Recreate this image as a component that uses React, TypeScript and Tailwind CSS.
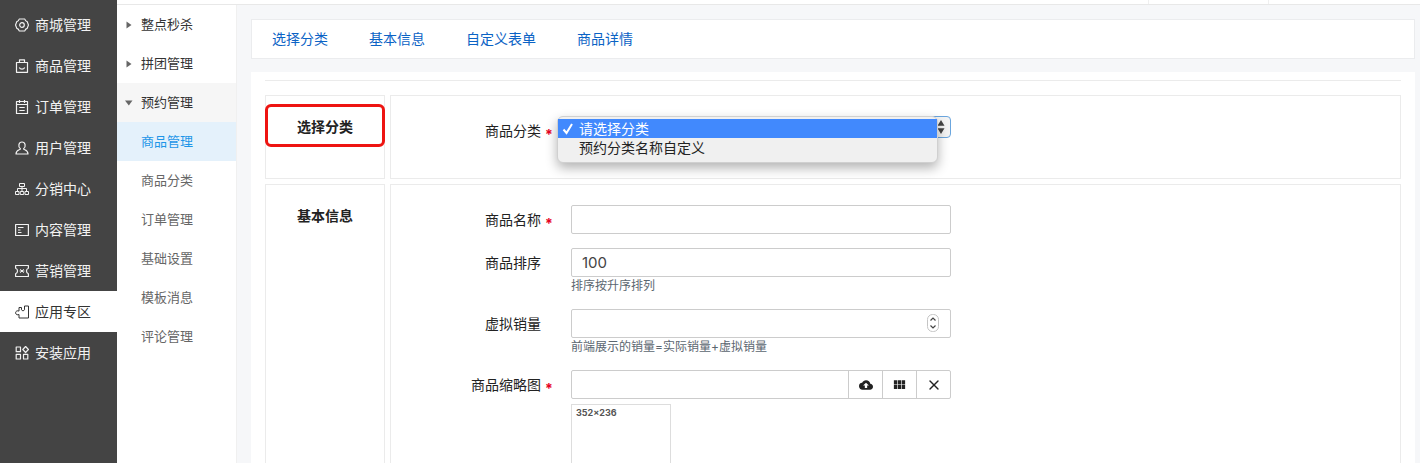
import React from "react";
import { X } from "lucide-react";
import { MdCloudUpload, MdViewModule } from "react-icons/md";

interface MenuItem {
    label: string;
    icon: React.ReactNode;
    active?: boolean;
}

const Icon = ({ children }: { children: React.ReactNode }) => (
    <svg
        viewBox="0 0 14 14"
        className="w-3.5 h-3.5 shrink-0"
        fill="none"
        stroke="currentColor"
        strokeWidth="1.2"
        strokeLinejoin="round"
        aria-hidden="true"
    >
        {children}
    </svg>
);

const mainMenu: MenuItem[] = [
    {
        label: "商城管理",
        icon: (
            <Icon>
                <path d="M4.200 1h5.600c.3 1.500 1 2.300 2.400 2.600L13.500 7l-1.300 3.400c-1.400.3-2.100 1.100-2.400 2.600H4.200c-.3-1.500-1-2.300-2.400-2.600L.5 7l1.300-3.400C3.200 3.300 3.900 2.500 4.200 1z" />
                <circle cx="7" cy="7" r="2.300" />
            </Icon>
        ),
    },
    {
        label: "商品管理",
        icon: (
            <Icon>
                <path d="M1.500 3.500h11v9.800h-11zM4.500 3.300V.8h5v2.500M4.300 8.500c1 2.200 4.400 2.200 5.400 0" />
            </Icon>
        ),
    },
    {
        label: "订单管理",
        icon: (
            <Icon>
                <path d="M1.500 1.500h11v12h-11zM1.500 4.500h11M4.500 0v3M9.500 0v3M4.300 7.500h5.400M4.300 10.500h5.400" />
            </Icon>
        ),
    },
    {
        label: "用户管理",
        icon: (
            <Icon>
                <path d="M5.400 7.800C2.800 6 3.500 1 7 1S11.200 6 8.600 7.800c.2 1.200 4.400.8 4.400 5.200H1c0-4.400 4.200-4 4.400-5.200z" />
            </Icon>
        ),
    },
    {
        label: "分销中心",
        icon: (
            <Icon>
                <path d="M4.500 1.500h5v3h-5zM7 4.500v5M2.500 9.500v-3h9v3M.5 9.500h3.500v3H.5zM5.250 9.500h3.500v3h-3.500zM10 9.500h3.500v3H10z" strokeWidth="1" />
            </Icon>
        ),
    },
    {
        label: "内容管理",
        icon: (
            <Icon>
                <path d="M.6 1.500h12.800v11H.6zM3 4.500h5.500M3 7h2.500M3 9.500h3.500" />
            </Icon>
        ),
    },
    {
        label: "营销管理",
        icon: (
            <Icon>
                <path d="M.6 1.500h12.800v2.800c-2.600.8-2.600 4.600 0 5.400v2.800H.6V9.700c2.600-.8 2.600-4.600 0-5.400z" />
                <path d="M5.300 5.200l3.400 3.600M8.700 5.200L5.300 8.800M4.600 7h4.800" strokeWidth="1" />
            </Icon>
        ),
    },
    {
        label: "应用专区",
        active: true,
        icon: (
            <Icon>
                <path d="M4 2.500h2.500v2.300c.6 1.300 2.400 1.300 3 0V1h4v12H4V9.500C2.600 10.300.6 9.600.6 7.800S2.600 5.300 4 6.100z" strokeWidth="1" />
            </Icon>
        ),
    },
    {
        label: "安装应用",
        icon: (
            <Icon>
                <path d="M1.200 1h4.300v4.700H1.200zM1.200 8.300h4.300V13H1.200zM8.500 8.300h4.300V13H8.500zM10.600.5l2.800 3-2.800 3-2.800-3z" />
            </Icon>
        ),
    },
];

const groups = [
    { label: "整点秒杀", open: false, children: [] },
    { label: "拼团管理", open: false, children: [] },
    {
        label: "预约管理",
        open: true,
        children: ["商品管理", "商品分类", "订单管理", "基础设置", "模板消息", "评论管理"],
    },
];

const tabs = ["选择分类", "基本信息", "自定义表单", "商品详情"];

interface FieldProps {
    id: string;
    label: string;
    required?: boolean;
    hint?: string;
    children: React.ReactNode;
}

const Field = ({ id, label, required, hint, children }: FieldProps) => (
    <div className="flex">
        <label htmlFor={id} className="flex h-[29px] w-[180px] shrink-0 leading-[29px]">
            <span className="w-[150px] text-right">{label}</span>
            {required && <span className="pl-1 pt-1 font-bold text-[#e60023]">*</span>}
        </label>
        <div className="w-[380px]">
            {children}
            {hint && <p className="text-xs leading-[18px] text-[#5b6670]">{hint}</p>}
        </div>
    </div>
);

const SectionTitle = ({ children }: { children: React.ReactNode }) => (
    <div className="relative w-[120px] shrink-0 border border-[#ebebeb] pt-5 text-center font-bold leading-[22px]">
        {children}
    </div>
);

const inputClass = "block w-full h-[29px] px-2.5 rounded-xs border border-[#cccccc] bg-white text-[15px] text-[#444] outline-none";

export default function App() {
    return (
        <div className="flex h-screen overflow-hidden bg-[#f6f7f9] font-['Inter','Noto_Sans_CJK_SC',sans-serif] text-sm text-[#222]">
            {/* Main menu */}
            <nav className="w-[117px] shrink-0 bg-[#444444] pt-1">
                {mainMenu.map((item) => (
                    <a
                        key={item.label}
                        href="#"
                        className={`flex h-[41px] items-center gap-1.5 pl-[15px] ${item.active ? "bg-white text-[#333]" : "text-[#f2f2f2]"}`}
                    >
                        {item.icon}
                        {item.label}
                    </a>
                ))}
            </nav>

            <div className="flex min-w-0 grow flex-col">
                <header className="flex h-[5px] shrink-0 justify-end border-b border-[#e8e8e8] bg-white">
                    <div className="w-[120px] border-l border-[#f0f0f0]" />
                    <div className="w-[152px] border-l border-[#f0f0f0]" />
                </header>

                <div className="flex min-h-0 grow">
                    {/* Sub menu */}
                    <nav className="w-[120px] shrink-0 border-r border-[#f0f0f0] bg-white text-[13px]">
                        {groups.map((group) => (
                            <div key={group.label}>
                                <button
                                    type="button"
                                    aria-expanded={group.open}
                                    className={`flex h-[39px] w-full items-center gap-2 pl-2 text-[#333] ${group.open ? "bg-[#f6f6f6]" : ""}`}
                                >
                                    <svg viewBox="0 0 8 8" className="h-2 w-2" fill="#666" aria-hidden="true">
                                        {group.open ? <path d="M0 1.500h7.500L3.800 6.500z" /> : <path d="M1.500.5l5 3.500-5 3.500z" />}
                                    </svg>
                                    {group.label}
                                </button>
                                {group.children.map((child, i) => (
                                    <a
                                        key={child}
                                        href="#"
                                        className={`flex h-[39px] items-center pl-6 ${i === 0 ? "bg-[#e4f1fb] text-[#1e96e8]" : "text-[#666]"}`}
                                    >
                                        {child}
                                    </a>
                                ))}
                            </div>
                        ))}
                    </nav>

                    <main className="flex min-w-0 grow flex-col gap-[13px] pl-3.5 pr-[5px] pt-3.5">
                        <div className="flex h-10 shrink-0 items-center gap-[41px] border border-[#ebecee] bg-white pl-5 text-[#0b63c5]">
                            {tabs.map((tab) => (
                                <a key={tab} href="#">
                                    {tab}
                                </a>
                            ))}
                        </div>

                        <form className="flex grow flex-col bg-white pl-3.5 pr-3.5 pt-2">
                            <hr className="mb-3.5 border-[#ebebeb]" />

                            {/* Category */}
                            <section className="mb-[5px] flex gap-[5px]">
                                <SectionTitle>
                                    选择分类
                                    <span className="absolute -inset-x-px top-2 h-[43px] rounded-md border-3 border-[#ee1411]" />
                                </SectionTitle>
                                <div className="grow border border-[#ebebeb] pb-[33px] pt-5">
                                    <Field id="category" label="商品分类" required>
                                        <div className="relative">
                                            <select
                                                id="category"
                                                className="block h-[22px] w-full appearance-none rounded-sm border border-[#6ba6de] bg-[#f4f4f4] px-2"
                                            >
                                                <option>请选择分类</option>
                                                <option>预约分类名称自定义</option>
                                            </select>
                                            <svg viewBox="0 0 8 14" className="absolute right-1.5 top-1 h-3.5 w-2" fill="#444" aria-hidden="true">
                                                <path d="M4 0l3.500 5.800h-7zM4 14l3.500-5.800h-7z" />
                                            </svg>
                                            <ul
                                                role="listbox"
                                                className="absolute -left-3.5 top-0 z-10 w-[381px] rounded-md border border-[#d0d0d0] bg-[#f0f0f0] pb-[5px] pt-0.5 leading-[19px] shadow-[0_5px_12px_rgba(0,0,0,0.3)]"
                                            >
                                                <li role="option" aria-selected="true" className="flex items-center bg-[#4189fd] text-white">
                                                    <svg viewBox="0 0 21 12" className="h-3 w-[21px]" fill="none" stroke="currentColor" strokeWidth="2" aria-hidden="true">
                                                        <path d="M5.500 6.500l3 3.500 5.500-9" />
                                                    </svg>
                                                    请选择分类
                                                </li>
                                                <li role="option" aria-selected="false" className="pl-[21px]">
                                                    预约分类名称自定义
                                                </li>
                                            </ul>
                                        </div>
                                    </Field>
                                </div>
                            </section>

                            {/* Basic info */}
                            <section className="flex grow gap-[5px]">
                                <SectionTitle>基本信息</SectionTitle>
                                <div className="flex grow flex-col gap-3.5 border border-[#ebebeb] pt-5">
                                    <Field id="name" label="商品名称" required>
                                        <input id="name" type="text" className={inputClass} />
                                    </Field>
                                    <Field id="sort" label="商品排序" hint="排序按升序排列">
                                        <input id="sort" type="text" defaultValue="100" className={inputClass} />
                                    </Field>
                                    <Field id="sales" label="虚拟销量" hint="前端展示的销量=实际销量+虚拟销量">
                                        <div className="relative">
                                            <input id="sales" type="text" inputMode="numeric" className={inputClass} />
                                            <svg
                                                viewBox="0 0 12 18"
                                                className="absolute right-3 top-[5px] h-[18px] w-3"
                                                fill="none"
                                                stroke="#444"
                                                aria-hidden="true"
                                            >
                                                <rect x=".5" y=".5" width="11" height="17" rx="5" stroke="#c4c4c4" />
                                                <path d="M3.500 6.500L6 4l2.500 2.500M3.500 11.500L6 14l2.500-2.500" strokeWidth="1.2" />
                                            </svg>
                                        </div>
                                    </Field>
                                    <Field id="thumb" label="商品缩略图" required>
                                        <div className="flex h-[29px] rounded-xs border border-[#cccccc]">
                                            <input id="thumb" type="text" className="min-w-0 grow px-2.5 text-[15px] outline-none" />
                                            <button type="button" aria-label="上传" className="flex w-[34px] items-center justify-center border-l border-[#cccccc]">
                                                <MdCloudUpload size={14} />
                                            </button>
                                            <button type="button" aria-label="图库" className="flex w-[34px] items-center justify-center border-l border-[#cccccc]">
                                                <MdViewModule size={15} />
                                            </button>
                                            <button type="button" aria-label="清除" className="flex w-[34px] items-center justify-center border-l border-[#cccccc]">
                                                <X size={16} strokeWidth={2} />
                                            </button>
                                        </div>
                                        <div className="mt-[5px] h-[100px] w-[100px] border border-[#dddddd] px-1 text-[9px] font-bold leading-4 text-[#555]">
                                            352×236
                                        </div>
                                    </Field>
                                </div>
                            </section>
                        </form>
                    </main>
                </div>
            </div>
        </div>
    );
}
